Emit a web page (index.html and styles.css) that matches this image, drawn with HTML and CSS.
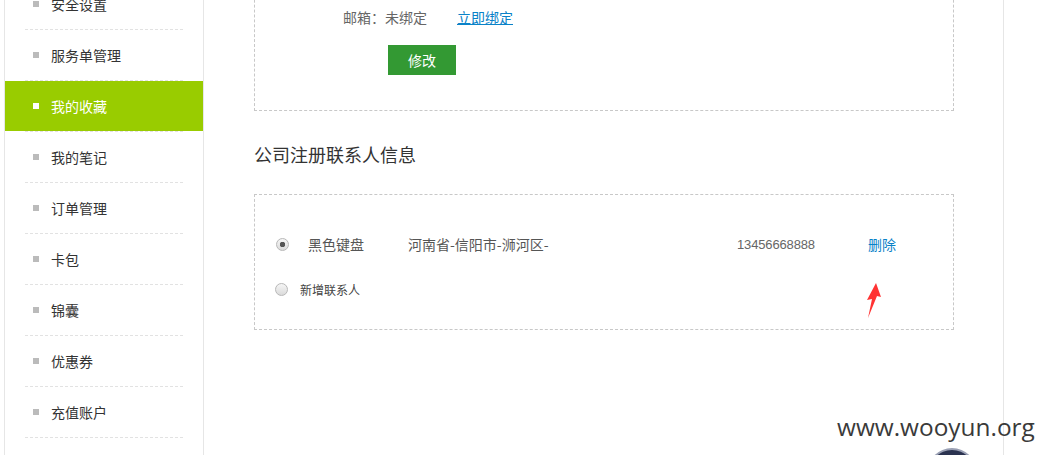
FILE: index.html
```html
<!DOCTYPE html>
<html lang="zh-CN">
<head>
	<meta charset="UTF-8">
	<title>会员中心 - 公司注册联系人信息</title>
	<link rel="stylesheet" href="styles.css">
</head>
<body>
<div class="page">
	<!-- 左侧菜单 -->
	<ul class="side-menu">
		<li><a href="#"><i class="dot"></i>安全设置</a></li>
		<li><a href="#"><i class="dot"></i>服务单管理</a></li>
		<li class="active"><a href="#"><i class="dot"></i>我的收藏</a></li>
		<li><a href="#"><i class="dot"></i>我的笔记</a></li>
		<li><a href="#"><i class="dot"></i>订单管理</a></li>
		<li><a href="#"><i class="dot"></i>卡包</a></li>
		<li><a href="#"><i class="dot"></i>锦囊</a></li>
		<li><a href="#"><i class="dot"></i>优惠券</a></li>
		<li><a href="#"><i class="dot"></i>充值账户</a></li>
	</ul>

	<!-- 右侧内容 -->
	<div class="main">
		<div class="box info-box">
			<div class="form-row">
				<span class="label">邮箱：</span>
				<span class="value">未绑定</span>
				<a class="bind-link" href="#">立即绑定</a>
			</div>
			<button class="btn-edit">修改</button>
		</div>

		<h3 class="section-title">公司注册联系人信息</h3>

		<div class="box contact-box">
			<div class="contact-row">
				<input type="radio" name="contact" class="radio" checked>
				<span class="c-name">黑色键盘</span>
				<span class="c-addr">河南省-信阳市-浉河区-</span>
				<span class="c-phone">13456668888</span>
				<a class="c-del" href="#">删除</a>
			</div>
			<div class="contact-row add-row">
				<input type="radio" name="contact" class="radio">
				<span class="c-add">新增联系人</span>
			</div>
		</div>
	</div>
</div>

<!-- 截图上的标注 -->
<svg class="mark-arrow" width="20" height="40" viewBox="0 0 20 40">
	<polygon points="11,1 16,15 12,14 3,36 7,17 2,18" fill="#ff3333"/>
</svg>
<div class="watermark">www.wooyun.org</div>
<div class="float-ball"></div>
</body>
</html>
```

FILE: styles.css
```css
body {
	margin: 0;
	background: #fff;
	font-family: "Noto Sans CJK SC", "Liberation Sans", sans-serif;
	font-size: 14px;
	color: #333;
	overflow: hidden;
	height: 455px;
	position: relative;
}

a {
	text-decoration: none;
}

.page {
	display: flex;
	width: 998px;
	margin-left: 4px;
	min-height: 455px;
	border-left: 1px solid #e6e6e6;
	border-right: 1px solid #e6e6e6;
}

/* SIDE MENU */
.side-menu {
	list-style: none;
	margin: -21px 0 0;
	padding: 0;
	width: 198px;
	border-right: 1px solid #e6e6e6;
	flex-shrink: 0;
}

.side-menu a {
	display: flex;
	align-items: center;
	height: 50px;
	padding-left: 28px;
	padding-bottom: 1px;
	box-sizing: border-box;
	color: #333;
	font-size: 14px;
}

.side-menu li::after {
	content: "";
	display: block;
	margin: 0 20px;
	border-top: 1px dashed #e2e2e2;
}

.side-menu .dot {
	width: 6px;
	height: 6px;
	background: #bbb;
	margin-right: 12px;
}

.side-menu .active a {
	background: #99cc00;
	color: #fff;
}

.side-menu .active .dot {
	background: #fff;
}

/* MAIN */
.main {
	flex: 1;
	padding: 0 49px 0 50px;
}

.box {
	width: 698px;
	border: 1px dashed #c8c8c8;
}

.info-box {
	margin-top: -20px;
	padding: 21px 0 35px;
}

.form-row {
	display: flex;
	align-items: center;
	height: 30px;
	color: #666;
}

.form-row .label {
	width: 130px;
	text-align: right;
}

.bind-link {
	margin-left: 30px;
	color: #0a82c8;
	text-decoration: underline;
}

.btn-edit {
	display: block;
	margin: 13px 0 0 133px;
	width: 68px;
	height: 30px;
	border: 0;
	background: #339933;
	color: #fff;
	font-family: inherit;
	font-size: 14px;
	padding: 0;
}

.section-title {
	margin: 31px 0 28px;
	font-size: 18px;
	line-height: 24px;
	font-weight: normal;
	color: #333;
}

.contact-box {
	padding: 34px 0 25px;
}

.contact-row {
	display: flex;
	align-items: center;
	height: 30px;
	color: #555;
}

.add-row {
	margin-top: 15px;
}

.radio {
	appearance: none;
	-webkit-appearance: none;
	width: 13px;
	height: 13px;
	margin: 0 0 0 21px;
	border: 1px solid #b8b8b8;
	border-radius: 50%;
	background: linear-gradient(#f6f6f6, #dadada);
	flex-shrink: 0;
}

.radio:checked {
	background: radial-gradient(circle, #555 0, #555 2.5px, transparent 3px), linear-gradient(#f6f6f6, #dadada);
}

.c-name {
	margin-left: 19px;
	width: 100px;
}

.c-addr {
	width: 329px;
}

.c-phone {
	width: 131px;
	font-family: "Liberation Sans", sans-serif;
	font-size: 13px;
	letter-spacing: -0.15px;
	color: #666;
}

.c-del {
	color: #0a82c8;
}

.add-row .radio {
	margin-left: 20px;
}

.c-add {
	margin-left: 12px;
	font-size: 12px;
	color: #444;
}

/* ANNOTATIONS */
.mark-arrow {
	position: absolute;
	left: 865px;
	top: 282px;
}

.watermark {
	position: absolute;
	left: 837px;
	top: 410px;
	font-family: "Open Sans", sans-serif;
	font-size: 24.4px;
	line-height: 34px;
	color: #3a3a3a;
}

.float-ball {
	position: absolute;
	left: 929px;
	top: 450px;
	width: 46px;
	height: 46px;
	border-radius: 50%;
	background: #2b3350;
	box-shadow: 0 0 0 2px #9aa0b4;
}
```
